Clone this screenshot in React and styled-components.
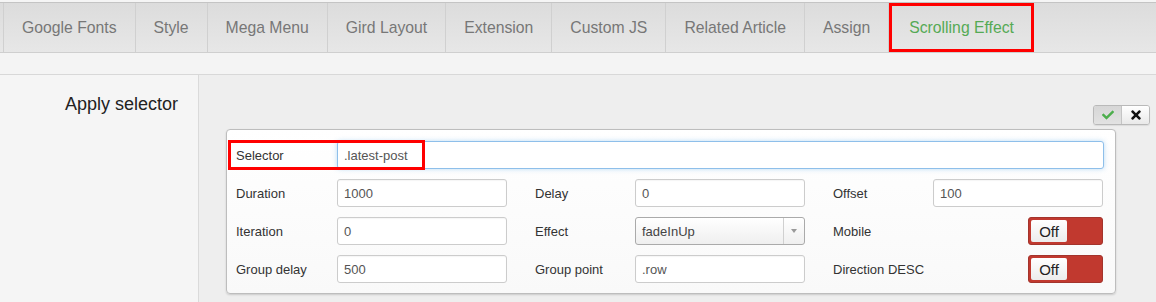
import styled, { createGlobalStyle } from 'styled-components'
import { FaCheck, FaTimes } from 'react-icons/fa'

const Global = createGlobalStyle`
body{
margin:0;
background:#f5f5f5;
font-family:"Liberation Sans",Arial,sans-serif;
}
`
const Page = styled.div`
padding-top:2px;
width:1156px;
height:300px;
overflow:hidden;
`
const TabBar = styled.div`
display:flex;
height:49px;
padding-left:3px;
border-top:1px solid #c4c4c4;
border-bottom:1px solid #cfcfcf;
background:linear-gradient(#dcdcdc,#e7e7e7);
`
const Tab = styled.div`
display:flex;
align-items:center;
font-size:15.75px;
color:${p => (p.$active ? '#55aa55' : '#777')};
border-left:${p => (p.$first ? '1px solid #d0d0d0' : 'none')};
border-right:${p => (p.$active ? 'none' : '1px solid #d0d0d0')};
outline:${p => (p.$active ? '3px solid #ff0000' : 'none')};
outline-offset:-3px;
padding:0 ${p => (p.$active ? '20px' : '18px')};
`
const Band = styled.div`
height:21px;
background:#f4f4f4;
border-bottom:1px solid #d8d8d8;
`
const Content = styled.div`
display:grid;
grid-template-columns:199px 1fr;
height:230px;
`
const Side = styled.div`
background:#f5f5f5;
border-right:1px solid #dadada;
padding:19px 20px 0 0;
text-align:right;
font-size:18px;
color:#222;
`
const Main = styled.div`
background:#eeeeee;
padding:30px 6px 0 27px;
`
const Toolbar = styled.div`
display:flex;
justify-content:flex-end;
margin-bottom:4px;
`
const BtnGroup = styled.div`
display:flex;
border:1px solid #b9b9b9;
border-radius:3px;
overflow:hidden;
box-shadow:0 1px 1px rgba(0,0,0,.08);
`
const IconBtn = styled.div`
width:27px;
height:18px;
display:flex;
align-items:center;
justify-content:center;
background:${p => (p.$pressed ? 'linear-gradient(#d6d6d6,#e2e2e2)' : 'linear-gradient(#ffffff,#e9e9e9)')};
border-left:${p => (p.$pressed ? 'none' : '1px solid #c4c4c4')};
color:${p => p.$color};
font-size:${p => p.$size}px;
`
const Panel = styled.div`
margin-right:34px;
background:linear-gradient(#ffffff,#f9f9f9);
border:1px solid #bdbdbd;
border-radius:4px;
box-shadow:0 1px 2px rgba(0,0,0,.15);
padding:11px 11px 10px 9px;
display:flex;
flex-direction:column;
gap:10px;
`
const SelectorRow = styled.div`
position:relative;
display:flex;
align-items:center;
height:28px;
`
const Row = styled.div`
display:flex;
gap:28px;
height:28px;
`
const Field = styled.div`
display:grid;
grid-template-columns:${p => (p.$wide ? '101px 170px' : '100px 170px')};
align-items:center;
`
const Label = styled.div`
font-size:13px;
color:#333;
${p => p.$fixed && 'width:101px;flex:none;'}
`
const Input = styled.div`
box-sizing:border-box;
height:28px;
display:flex;
align-items:center;
padding:0 6px;
font-size:13px;
color:#555;
background:#fff;
border:1px solid ${p => (p.$focus ? '#8ebfea' : '#cccccc')};
border-radius:3px;
box-shadow:${p => (p.$focus ? '0 0 5px rgba(102,175,233,.45)' : 'inset 0 1px 1px rgba(0,0,0,.04)')};
${p => p.$grow && 'flex:1;'}
`
const Select = styled.div`
box-sizing:border-box;
height:28px;
display:flex;
align-items:center;
font-size:13px;
color:#444;
border:1px solid #aaaaaa;
border-radius:3px;
background:linear-gradient(#ffffff,#efefef);
`
const SelectText = styled.div`
flex:1;
padding-left:6px;
`
const Arrow = styled.div`
width:20px;
height:100%;
border-left:1px solid #d0d0d0;
display:flex;
align-items:center;
justify-content:center;
&:after{
content:'';
border-left:3px solid transparent;
border-right:3px solid transparent;
border-top:4px solid #999;
}
`
const ToggleCell = styled.div`
display:flex;
justify-content:flex-end;
`
const Toggle = styled.div`
box-sizing:border-box;
width:75px;
height:28px;
padding:2px;
background:#c1392f;
border:1px solid #a3342c;
border-radius:3px;
`
const Knob = styled.div`
width:36px;
height:100%;
display:flex;
align-items:center;
justify-content:center;
background:linear-gradient(#ffffff,#ececec);
border-radius:2px;
font-size:15px;
color:#222;
`
const Mark = styled.div`
position:absolute;
left:-8px;
top:-1px;
width:197px;
height:30px;
box-sizing:border-box;
border:3px solid #ff0000;
pointer-events:none;
`

const tabs = ['Google Fonts', 'Style', 'Mega Menu', 'Gird Layout', 'Extension', 'Custom JS', 'Related Article', 'Assign', 'Scrolling Effect']

const rows = [
  [['Duration', '1000'], ['Delay', '0'], ['Offset', '100']],
  [['Iteration', '0'], ['Effect', 'fadeInUp', 'select'], ['Mobile', 'Off', 'toggle']],
  [['Group delay', '500'], ['Group point', '.row'], ['Direction DESC', 'Off', 'toggle']],
]

const Control = ({ value, kind }) => {
  if (kind === 'select') return <Select><SelectText>{value}</SelectText><Arrow /></Select>
  if (kind === 'toggle') return <ToggleCell><Toggle><Knob>{value}</Knob></Toggle></ToggleCell>
  return <Input>{value}</Input>
}

const App = () => (
  <Page>
    <Global />
    <TabBar>
      {tabs.map((t, i) => (
        <Tab key={t} $first={i === 0} $active={i === tabs.length - 1}>{t}</Tab>
      ))}
    </TabBar>
    <Band />
    <Content>
      <Side>Apply selector</Side>
      <Main>
        <Toolbar>
          <BtnGroup>
            <IconBtn $pressed $color="#4cae4c" $size={12}><FaCheck /></IconBtn>
            <IconBtn $color="#111" $size={14}><FaTimes /></IconBtn>
          </BtnGroup>
        </Toolbar>
        <Panel>
          <SelectorRow>
            <Label $fixed>Selector</Label>
            <Input $grow $focus>.latest-post</Input>
            <Mark />
          </SelectorRow>
          {rows.map((r, i) => (
            <Row key={i}>
              {r.map(([label, value, kind], j) => (
                <Field key={label} $wide={j === 0}>
                  <Label>{label}</Label>
                  <Control value={value} kind={kind} />
                </Field>
              ))}
            </Row>
          ))}
        </Panel>
      </Main>
    </Content>
  </Page>
)

export default App
